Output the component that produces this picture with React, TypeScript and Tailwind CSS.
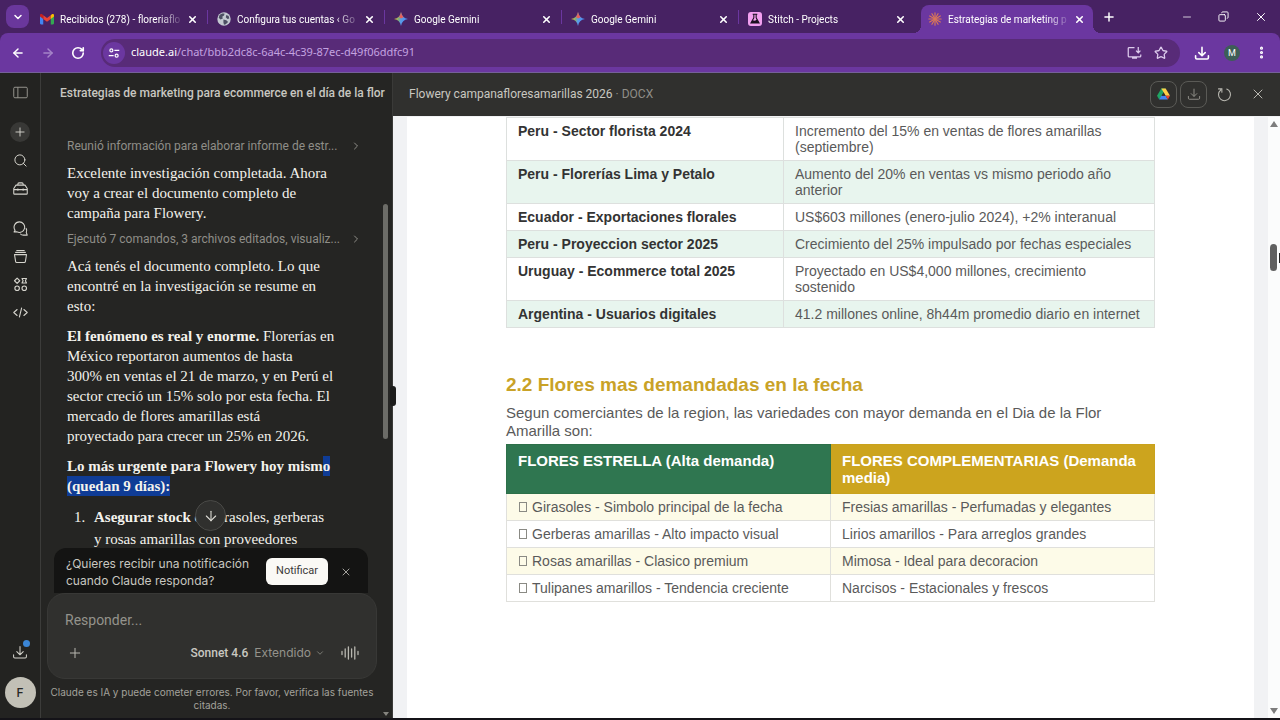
import React from "react";
import {
  ArrowDown,
  ArrowLeft,
  ArrowRight,
  ChevronDown,
  ChevronRight,
  Copy,
  EllipsisVertical,
  Minus,
  Plus,
  RotateCw,
  Search,
  Star,
  X
} from "lucide-react";
import { clsx } from "clsx";

type IconProps = { className?: string };

type Tab = {
  id: string;
  title: string;
  icon: React.ElementType;
  active?: boolean;
};

function GmailIcon({ className }: IconProps) {
  return (
    <svg viewBox="0 0 26 20" className={className}>
      <path d="M0 3v15a2 2 0 0 0 2 2h4V8z" fill="#4285f4" />
      <path d="M20 8v12h4a2 2 0 0 0 2-2V3z" fill="#34a853" />
      <path d="M6 3v7l7 5 7-5V3l-7 5z" fill="#ea4335" />
      <path d="M0 3v2.5L6 10V3L4 1.400C2.300.2 0 1 0 3z" fill="#c5221f" />
      <path d="M26 3v2.500L20 10V3l2-1.600C23.700.2 26 1 26 3z" fill="#fbbc04" />
    </svg>
  );
}

function GlobeIcon({ className }: IconProps) {
  return (
    <svg viewBox="0 0 24 24" className={className}>
      <circle cx="12" cy="12" r="11.500" fill="#c3c9d1" />
      <path d="M4 6c3-4 7-4 9-3l-1 3-3 2 1 3-4 2-3-3zM11 13l5 1 3 3-4 4-3 1-1-4zM16 5l4 2 1 4-3 1-3-3z" fill="#4c4f63" />
    </svg>
  );
}

function GeminiIcon({ className }: IconProps) {
  return (
    <svg viewBox="0 0 24 24" className={className}>
      <defs>
        <linearGradient id="gemini" x1="0" y1="0.4" x2="1" y2="0.600">
          <stop offset="0" stopColor="#f2c230" />
          <stop offset="0.350" stopColor="#7fae7a" />
          <stop offset="0.500" stopColor="#5a9be8" />
          <stop offset="1" stopColor="#4a86f0" />
        </linearGradient>
      </defs>
      <path d="M12 0c1.200 7 5 10.800 12 12-7 1.200-10.800 5-12 12-1.200-7-5-10.800-12-12C7 10.800 10.800 7 12 0z" fill="url(#gemini)" />
      <path d="M12 0c1.200 5 2.500 7 4.500 9L12 11 8.500 8.500C10.500 6.500 11.300 4 12 0z" fill="#e5605c" />
    </svg>
  );
}

function StitchIcon({ className }: IconProps) {
  return (
    <svg viewBox="0 0 24 24" className={className}>
      <rect width="24" height="24" rx="5" fill="#f2a0f0" />
      <path d="M8 4h8M10 4v6l-5 9h14l-5-9V4" fill="none" stroke="#1b1020" strokeWidth="1.800" />
      <path d="M8 14l4 1 3-2 4 6H5z" fill="#1b1020" />
    </svg>
  );
}

const rays = [0, 30, 60, 90, 120, 150, 180, 210, 240, 270, 300, 330];

function ClaudeIcon({ className }: IconProps) {
  return (
    <svg viewBox="0 0 24 24" className={className} stroke="#d97757" strokeWidth="2" strokeLinecap="round">
      {rays.map((deg) => (
        <path key={deg} d="M12 11V1.500" transform={`rotate(${deg} 12 12)`} />
      ))}
    </svg>
  );
}

function DriveIcon({ className }: IconProps) {
  return (
    <svg viewBox="0 0 24 22" className={className}>
      <path d="M8 1h8l-4 7-5 9-3 4-4-7z" fill="#1fa463" />
      <path d="M8 1h8l8 13h-8z" fill="#ffcf48" />
      <path d="M4 21l4-7h8l4 7z" fill="#4285f4" />
      <path d="M16 14h8l-4 7z" fill="#ea4335" />
      <path d="M12 8l3.500 6h-7z" fill="#30302e" />
    </svg>
  );
}

function TrayIcon({ className }: IconProps) {
  return (
    <svg viewBox="0 0 20 20" fill="none" stroke="currentColor" strokeLinecap="round" strokeLinejoin="round" className={className}>
      <path d="M10 3v10M6 9.500l4 4 4-4M2 13.500V16a1.500 1.500 0 0 0 1.500 1.500h13A1.500 1.500 0 0 0 18 16v-2.500" />
    </svg>
  );
}

function InstallIcon({ className }: IconProps) {
  return (
    <svg viewBox="0 0 24 24" fill="none" stroke="currentColor" strokeWidth="2" className={className}>
      <path d="M12 4H3.500A1.500 1.500 0 0 0 2 5.500v12A1.500 1.500 0 0 0 3.500 19h17a1.500 1.500 0 0 0 1.500-1.500V15M8 21h8M18 3v9M14.500 9l3.500 3.500L21.500 9" />
    </svg>
  );
}

function TuneIcon({ className }: IconProps) {
  return (
    <svg viewBox="0 0 16 16" fill="none" stroke="currentColor" strokeWidth="1.600" className={className}>
      <circle cx="4.500" cy="4.500" r="2" />
      <path d="M8.500 4.500H15M1 11.500h6.500" />
      <circle cx="11.500" cy="11.500" r="2" />
    </svg>
  );
}

function SidebarIcon({ className }: IconProps) {
  return (
    <svg viewBox="0 0 20 20" fill="none" stroke="currentColor" strokeWidth="1.200" className={className}>
      <rect x="1" y="3" width="18" height="14" rx="1.500" />
      <path d="M6.500 3v14" />
    </svg>
  );
}

function ToolboxIcon({ className }: IconProps) {
  return (
    <svg viewBox="0 0 20 20" fill="none" stroke="currentColor" strokeWidth="1.400" strokeLinejoin="round" className={className}>
      <path d="M6.500 5.500V4A1.500 1.500 0 0 1 8 2.500h4A1.500 1.500 0 0 1 13.500 4v1.500M4 5.500h12l3 4.500v6.500a1 1 0 0 1-1 1H2a1 1 0 0 1-1-1V10zM1 11.500h18M6.500 10v3M13.500 10v3" />
    </svg>
  );
}

function ChatsIcon({ className }: IconProps) {
  return (
    <svg viewBox="0 0 20 20" fill="none" stroke="currentColor" strokeWidth="1.400" strokeLinejoin="round" className={className}>
      <path d="M8.500 1.200a7 7 0 1 1-3 13.300H1.500l1.300-2.200A7 7 0 0 1 8.500 1.200z" />
      <path d="M17.300 9.500c1.300 2 1.300 4 .4 5.800l1.300 3.500h-5c-1.800 0-3.300-.6-4.500-1.800" />
    </svg>
  );
}

function ProjectsIcon({ className }: IconProps) {
  return (
    <svg viewBox="0 0 20 20" fill="none" stroke="currentColor" strokeWidth="1.400" strokeLinecap="round" strokeLinejoin="round" className={className}>
      <path d="M5 2h10M3.500 4.500h13M2 7.500h16l-1.500 9.300a1.500 1.500 0 0 1-1.500 1.200H5a1.500 1.500 0 0 1-1.500-1.200z" />
    </svg>
  );
}

function ArtifactsIcon({ className }: IconProps) {
  return (
    <svg viewBox="0 0 20 20" fill="none" stroke="currentColor" strokeWidth="1.500" strokeLinejoin="round" className={className}>
      <path d="M5.500 1.500L9 5 5.500 8.500 2 5z" />
      <path d="M12 2h6l-1.500 3L18 8h-6l1.500-3z" />
      <circle cx="5.500" cy="15" r="3" />
      <circle cx="15" cy="15" r="3" />
    </svg>
  );
}

function CodeIcon({ className }: IconProps) {
  return (
    <svg viewBox="0 0 20 20" fill="none" stroke="currentColor" strokeWidth="1.400" strokeLinecap="round" strokeLinejoin="round" className={className}>
      <path d="M5.500 6L1 10l4.500 4M14.500 6l4.500 4-4.500 4M11.500 4l-3 12" />
    </svg>
  );
}

function VoiceIcon({ className }: IconProps) {
  return (
    <svg viewBox="0 0 18 14" fill="none" stroke="currentColor" strokeWidth="1.300" strokeLinecap="round" className={className}>
      <path d="M1 5.500v3M4.200 3v8M7.400 1v12M10.600 3v8M13.800 1v12M17 5.500v3" />
    </svg>
  );
}

function ReloadIcon({ className }: IconProps) {
  return (
    <svg viewBox="0 0 20 20" fill="none" stroke="currentColor" strokeWidth="1.400" strokeLinecap="round" className={className}>
      <path d="M13 2.800A8 8 0 1 1 5 4M2 2.500h4.500V7" />
    </svg>
  );
}

const tabs: Tab[] = [
  { id: "gmail", title: "Recibidos (278) - floreriaflo", icon: GmailIcon },
  { id: "config", title: "Configura tus cuentas ‹ Go", icon: GlobeIcon },
  { id: "gemini-1", title: "Google Gemini", icon: GeminiIcon },
  { id: "gemini-2", title: "Google Gemini", icon: GeminiIcon },
  { id: "stitch", title: "Stitch - Projects", icon: StitchIcon },
  { id: "claude", title: "Estrategias de marketing p", icon: ClaudeIcon, active: true }
];

const railItems = [
  { label: "Buscar", icon: Search },
  { label: "Personalizar", icon: ToolboxIcon },
  { label: "Chats", icon: ChatsIcon },
  { label: "Proyectos", icon: ProjectsIcon },
  { label: "Artefactos", icon: ArtifactsIcon },
  { label: "Código", icon: CodeIcon }
];

const marketRows = [
  ["Peru - Sector florista 2024", "Incremento del 15% en ventas de flores amarillas (septiembre)"],
  ["Peru - Florerías Lima y Petalo", "Aumento del 20% en ventas vs mismo periodo año anterior"],
  ["Ecuador - Exportaciones florales", "US$603 millones (enero-julio 2024), +2% interanual"],
  ["Peru - Proyeccion sector 2025", "Crecimiento del 25% impulsado por fechas especiales"],
  ["Uruguay - Ecommerce total 2025", "Proyectado en US$4,000 millones, crecimiento sostenido"],
  ["Argentina - Usuarios digitales", "41.2 millones online, 8h44m promedio diario en internet"]
];

const flowerRows = [
  ["Girasoles - Simbolo principal de la fecha", "Fresias amarillas - Perfumadas y elegantes"],
  ["Gerberas amarillas - Alto impacto visual", "Lirios amarillos - Para arreglos grandes"],
  ["Rosas amarillas - Clasico premium", "Mimosa - Ideal para decoracion"],
  ["Tulipanes amarillos - Tendencia creciente", "Narcisos - Estacionales y frescos"]
];

function TabStrip() {
  return (
    <div className="flex h-[33px] shrink-0 items-center bg-[#472263] pl-1.5 text-white">
      <button type="button" aria-label="Buscar pestañas" className="flex size-[23px] shrink-0 items-center justify-center rounded-lg bg-[#6a379c]">
        <ChevronDown className="size-3" strokeWidth={3} />
      </button>
      <div className="ml-0.5 flex h-full min-w-0 flex-1 items-end">
        {tabs.map((tab) => (
          <div
            key={tab.id}
            className={clsx(
              "relative flex h-7 min-w-0 items-center",
              tab.active ? "ml-[5px] w-[172px] rounded-t-lg bg-[#6b37a0] pr-2 pl-[7px]" : "w-[177px] pr-2.5 pl-[9px]"
            )}
          >
            <tab.icon className="size-3.5 shrink-0" />
            <button
              type="button"
              className="ml-1.5 min-w-0 flex-1 overflow-hidden text-left font-['Roboto',sans-serif] text-[10px] whitespace-nowrap [mask-image:linear-gradient(to_right,black_80%,transparent)]"
            >
              {tab.title}
            </button>
            <button type="button" aria-label="Cerrar pestaña" className="ml-0.5 flex size-3 shrink-0 items-center justify-center">
              <X className="size-[11px]" strokeWidth={3.5} />
            </button>
            {!tab.active && tab.id !== "stitch" && <span className="absolute top-[5px] right-0 h-3.5 w-px bg-[#6b37a0]" />}
            {tab.active && (
              <>
                <span className="absolute bottom-0 -left-2 size-2 bg-[radial-gradient(circle_at_0_0,transparent_8px,#6b37a0_8px)]" />
                <span className="absolute -right-2 bottom-0 size-2 bg-[radial-gradient(circle_at_100%_0,transparent_8px,#6b37a0_8px)]" />
              </>
            )}
          </div>
        ))}
        <button type="button" aria-label="Nueva pestaña" className="mb-[9px] ml-[9px] shrink-0">
          <Plus className="size-3.5" strokeWidth={2.5} />
        </button>
      </div>
      <div className="flex shrink-0 items-center gap-[25px] pr-3">
        <button type="button" aria-label="Minimizar"><Minus className="size-3" strokeWidth={1.5} /></button>
        <button type="button" aria-label="Restaurar"><Copy className="size-[11px] -scale-x-100" strokeWidth={2} /></button>
        <button type="button" aria-label="Cerrar"><X className="size-3.5" strokeWidth={1.7} /></button>
      </div>
    </div>
  );
}

function Toolbar() {
  return (
    <div className="shrink-0 bg-[#472263]">
      <div className="flex h-10 items-center rounded-t-lg border-b border-[#75609a] bg-[#6b37a0] pr-[11px] pl-[11px] text-white">
        <div className="flex gap-4">
          <button type="button" aria-label="Atrás"><ArrowLeft className="size-3.5" strokeWidth={2.5} /></button>
          <button type="button" aria-label="Adelante" className="text-[#a584c8]"><ArrowRight className="size-3.5" strokeWidth={2.5} /></button>
          <button type="button" aria-label="Recargar"><RotateCw className="size-3.5" strokeWidth={2.8} /></button>
        </div>
        <div className="ml-4 flex h-7 min-w-0 flex-1 items-center rounded-full bg-[#582b78] pr-3 pl-0.5">
          <button type="button" aria-label="Información del sitio" className="flex size-[22px] shrink-0 items-center justify-center rounded-full bg-[#6b37a0]">
            <TuneIcon className="size-3" />
          </button>
          <p className="ml-1.5 min-w-0 flex-1 truncate font-['Noto_Sans','Open_Sans',sans-serif] text-[11px] text-[#c3a3e0]">
            <span className="text-white">claude.ai</span>/chat/bbb2dc8c-6a4c-4c39-87ec-d49f06ddfc91
          </p>
          <div className="flex gap-3 text-[#dccbec]">
            <button type="button" aria-label="Instalar"><InstallIcon className="size-[15px]" /></button>
            <button type="button" aria-label="Favorito"><Star className="size-3.5" strokeWidth={2.2} /></button>
          </div>
        </div>
        <div className="ml-3.5 flex items-center">
          <button type="button" aria-label="Descargas"><TrayIcon className="size-4 stroke-2" /></button>
          <button type="button" className="ml-3.5 size-4 rounded-full bg-[#3d5e57] font-['Roboto',sans-serif] text-[9px] leading-4">M</button>
          <button type="button" aria-label="Menú" className="ml-3.5"><EllipsisVertical className="size-[15px]" strokeWidth={3} /></button>
        </div>
      </div>
    </div>
  );
}

function Rail() {
  return (
    <nav className="flex w-[41px] shrink-0 flex-col items-center border-r border-[#3c3c3a] bg-[#232321] pt-3 pb-2.5 text-[#d5d4cd]">
      <button type="button" aria-label="Barra lateral" className="text-[#a09f98]"><SidebarIcon className="size-[15px]" /></button>
      <button type="button" aria-label="Nuevo chat" className="mt-[22px] mb-1 flex size-5 items-center justify-center rounded-full bg-[#383836]">
        <Plus className="size-3.5" strokeWidth={1.6} />
      </button>
      {railItems.map((item) => (
        <button
          key={item.label}
          type="button"
          aria-label={item.label}
          className={clsx("flex h-7 items-center", item.label === "Chats" && "mt-3")}
        >
          <item.icon className="size-[15px]" strokeWidth={1.600} />
        </button>
      ))}
      <button type="button" aria-label="Descargar aplicación" className="relative mt-auto mb-[17px]">
        <TrayIcon className="size-4 stroke-[1.3px]" />
        <span className="absolute -top-1 -right-0.5 size-[7px] rounded-full bg-[#3b86d6]" />
      </button>
      <button type="button" className="size-[31px] rounded-full bg-[#c2c0b6] font-['Inter',sans-serif] text-xs font-medium text-[#262624]">F</button>
    </nav>
  );
}

function ToolLine({ children }: { children: React.ReactNode }) {
  return (
    <button type="button" className="flex h-5 w-full items-center justify-between text-left font-['Roboto',sans-serif] text-xs text-[#8f8e88]">
      <span className="min-w-0 whitespace-nowrap">{children}</span>
      <ChevronRight className="size-3 shrink-0" strokeWidth={2} />
    </button>
  );
}

function Chat() {
  return (
    <section className="relative flex w-[352px] shrink-0 flex-col border-r border-[#3a3a38] bg-[#252523]">
      <h1 className="h-[43px] shrink-0 overflow-hidden pl-[19px] font-['Roboto',sans-serif] text-xs leading-10 font-medium whitespace-nowrap text-[#c8c7c0]">
        Estrategias de marketing para ecommerce en el día de la flor
      </h1>

      <div className="relative min-h-0 flex-1 overflow-hidden pt-5 pr-[30px] pl-[26px] font-['Liberation_Serif',serif] text-[15px] leading-5 text-[#f3f2ec]">
        <ToolLine>Reunió información para elaborar informe de estr...</ToolLine>
        <p className="mt-[7px] mb-1.5 whitespace-nowrap">
          Excelente investigación completada. Ahora<br />
          voy a crear el documento completo de<br />
          campaña para Flowery.
        </p>
        <ToolLine>Ejecutó 7 comandos, 3 archivos editados, visualiz...</ToolLine>
        <p className="mt-[7px] whitespace-nowrap">
          Acá tenés el documento completo. Lo que<br />
          encontré en la investigación se resume en<br />
          esto:
        </p>
        <p className="mt-2.5 whitespace-nowrap">
          <strong>El fenómeno es real y enorme.</strong> Florerías en<br />
          México reportaron aumentos de hasta<br />
          300% en ventas el 21 de marzo, y en Perú el<br />
          sector creció un 15% solo por esta fecha. El<br />
          mercado de flores amarillas está<br />
          proyectado para crecer un 25% en 2026.
        </p>
        <p className="mt-2.5 font-bold whitespace-nowrap">
          Lo más urgente para Flowery hoy mism<span className="bg-[#0f3c96] py-0.5">o</span><br />
          <span className="bg-[#0f3c96] py-0.5">(quedan 9 días):</span>
        </p>
        <ol className="mt-2.5 list-decimal pl-[22px] leading-[22px] whitespace-nowrap">
          <li className="pl-[5px]">
            <strong>Asegurar stock</strong> de girasoles, gerberas<br />
            y rosas amarillas con proveedores
          </li>
        </ol>
      </div>

      <button
        type="button"
        aria-label="Ir al final"
        className="absolute bottom-[187px] left-[154px] flex size-[31px] items-center justify-center rounded-full border border-[#4a4a47] bg-[#30302e] text-[#e0dfd8]"
      >
        <ArrowDown className="size-4" strokeWidth={1.6} />
      </button>

      <footer className="shrink-0 pr-[15px] pl-1.5 font-['Inter',sans-serif]">
        <div className="mr-[9px] ml-[7px] flex h-[45px] items-center rounded-t-xl bg-[#141413] pt-0.5 pr-4 pl-3 text-[#c8c7c0]">
          <p className="flex-1 text-xs leading-[17px] whitespace-nowrap">
            ¿Quieres recibir una notificación<br />
            cuando Claude responda?
          </p>
          <button type="button" className="h-[27px] rounded-md bg-[#faf9f5] px-2.5 font-['Roboto',sans-serif] text-[11px] text-[#3a3a38]">Notificar</button>
          <button type="button" aria-label="Descartar" className="ml-3"><X className="size-3" strokeWidth={1.600} /></button>
        </div>
        <div className="h-[86px] rounded-[18px] border border-[#383836] bg-[#30302e] px-[17px] pt-4 font-['Roboto',sans-serif]">
          <input aria-label="Responder" placeholder="Responder..." className="block h-5 w-full bg-transparent text-sm text-white outline-none placeholder:text-[#94938c]" />
          <div className="mt-[15px] flex items-center text-[#b8b7b0]">
            <button type="button" aria-label="Adjuntar" className="ml-0.5"><Plus className="size-4" strokeWidth={1.5} /></button>
            <button type="button" className="ml-auto flex items-center text-xs">
              <span className="font-medium text-[#c9c8c1]">Sonnet 4.6</span>
              <span className="ml-1.5 font-['Inter',sans-serif] text-[#94938c]">Extendido</span>
              <ChevronDown className="ml-1 size-2.5 text-[#94938c]" strokeWidth={1.8} />
            </button>
            <button type="button" aria-label="Voz" className="ml-4"><VoiceIcon className="h-3.5 w-[18px]" /></button>
          </div>
        </div>
        <p className="pt-[7px] pb-1.5 text-center text-[10px] leading-[13px] text-[#a3a29b]">
          Claude es IA y puede cometer errores. Por favor, verifica las fuentes citadas.
        </p>
      </footer>

      <span className="absolute top-[131px] right-1 h-[235px] w-[5px] rounded-full bg-[#6c6c67]" />
      <span className="absolute right-[3px] bottom-0.5 border-x-[3px] border-t-4 border-x-transparent border-t-[#85857f]" />
      <span className="absolute top-[313px] -right-1 z-10 h-5 w-1.5 rounded-sm bg-[#1c1c1b]" />
    </section>
  );
}

function DocHeader() {
  return (
    <header className="flex h-[43px] shrink-0 items-center bg-[#30302e] pr-3.5 pb-px pl-4 font-['Roboto',sans-serif] text-xs text-[#8f8e88]">
      <h2 className="flex-1 whitespace-nowrap">
        <span className="text-[#c8c7c0]">Flowery campanafloresamarillas 2026</span> · DOCX
      </h2>
      <button type="button" aria-label="Guardar en Drive" className="flex size-[27px] items-center justify-center rounded-lg border border-[#5a5a56]">
        <DriveIcon className="h-3 w-[13px]" />
      </button>
      <button type="button" aria-label="Descargar" className="ml-[3px] flex size-[27px] items-center justify-center rounded-lg border border-[#5a5a56]">
        <TrayIcon className="size-3.5 stroke-[1.4px]" />
      </button>
      <button type="button" aria-label="Actualizar" className="ml-2.5 text-[#bab9b2]"><ReloadIcon className="size-[15px]" /></button>
      <button type="button" aria-label="Cerrar documento" className="ml-[18px] text-[#bab9b2]"><X className="size-4" strokeWidth={1.500} /></button>
    </header>
  );
}

function DocPage() {
  return (
    <article className="mr-3.5 ml-3.5 h-full flex-1 overflow-hidden bg-white px-[99px] font-['Liberation_Sans',sans-serif] text-[#5a5a5a]">
      <table className="w-full table-fixed border-collapse text-sm leading-4">
        <tbody>
          {marketRows.map(([name, detail], i) => (
            <tr key={name} className={clsx("align-top", i % 2 === 1 && "bg-[#e8f5ee]")}>
              <th scope="row" className="w-[277px] border border-[#dde0de] px-[11px] py-[5px] text-left text-[#333333]">{name}</th>
              <td className="border border-[#dde0de] px-[11px] py-[5px]">{detail}</td>
            </tr>
          ))}
        </tbody>
      </table>

      <h3 className="mt-[45px] text-[19px] leading-6 font-bold text-[#c9a227]">2.2 Flores mas demandadas en la fecha</h3>
      <p className="mt-[7px] text-[15px] leading-[18px]">
        Segun comerciantes de la region, las variedades con mayor demanda en el Dia de la Flor Amarilla son:
      </p>

      <table className="mt-1 w-full table-fixed border-collapse text-sm leading-4">
        <thead>
          <tr className="text-left align-top text-[15px] leading-[17px] text-white">
            <th scope="col" className="h-[49px] border border-[#2d7049] bg-[#2f7650] px-[11px] pt-[7px]">FLORES ESTRELLA (Alta demanda)</th>
            <th scope="col" className="h-[49px] border border-[#c9a21d] bg-[#cca41e] px-[11px] pt-[7px]">FLORES COMPLEMENTARIAS (Demanda media)</th>
          </tr>
        </thead>
        <tbody>
          {flowerRows.map(([star, extra], i) => (
            <tr key={star} className={clsx(i % 2 === 0 && "bg-[#fdfbe8]")}>
              <td className="border border-[#e0e0dc] px-[11px] py-[5px]">
                <span className="mr-[5px] ml-px inline-block h-2.5 w-2 border border-[#8a8a84]" />
                {star}
              </td>
              <td className="border border-[#e0e0dc] px-[11px] py-[5px]">{extra}</td>
            </tr>
          ))}
        </tbody>
      </table>
    </article>
  );
}

export default function App() {
  return (
    <div className="flex h-screen flex-col overflow-hidden border-b-2 border-[#141318] bg-[#252523]">
      <TabStrip />
      <Toolbar />
      <main className="flex min-h-0 flex-1">
        <Rail />
        <Chat />
        <section className="flex min-w-0 flex-1 flex-col">
          <DocHeader />
          <div className="relative flex min-h-0 flex-1 bg-[#f1f2f4] pt-px">
            <DocPage />
            <div className="flex w-3 shrink-0 flex-col items-center justify-between bg-[#fbfcfc] py-1">
              <span className="border-x-4 border-b-[6px] border-x-transparent border-b-[#7d7d7d]" />
              <span className="border-x-4 border-t-[6px] border-x-transparent border-t-[#7d7d7d]" />
            </div>
            <span className="absolute top-32 right-[3px] h-[27px] w-[7px] rounded-full bg-[#606060]" />
            <span className="absolute top-[137px] right-0 h-2.5 w-px bg-[#222222]" />
          </div>
        </section>
      </main>
    </div>
  );
}
